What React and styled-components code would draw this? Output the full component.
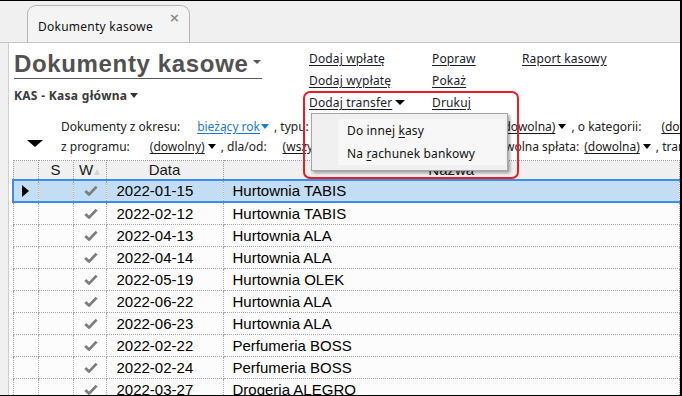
import React from 'react';
import styled, { createGlobalStyle } from 'styled-components';

const Global = createGlobalStyle`
  html, body { margin: 0; padding: 0; background: #fff; }
  body { font-family: "Noto Sans", "Liberation Sans", sans-serif; }
`;

const Frame = styled.div`
  position: relative;
  width: 682px;
  height: 396px;
  box-sizing: border-box;
  border-top: 1px solid #000;
  border-right: 2px solid #000;
  border-bottom: 1px solid #000;
  overflow: hidden;
  background: #fff;
  display: flex;
  flex-direction: column;
`;

const TabBar = styled.div`
  flex: none;
  height: 42px;
  box-sizing: border-box;
  background: #f0f0f0;
  border-bottom: 1px solid #c4c4c4;
  display: flex;
  align-items: flex-end;
  padding-left: 27px;
`;

const Tab = styled.div`
  width: 163px;
  height: 37px;
  box-sizing: border-box;
  border: 1px solid #b4b4b4;
  border-bottom: none;
  border-radius: 9px 9px 0 0;
  background: #f4f4f4;
  display: flex;
  justify-content: space-between;
  padding: 0 9px 0 10px;
`;

const TabLabel = styled.span`
  align-self: flex-end;
  padding-bottom: 7px;
  font-size: 12px;
  letter-spacing: 0.25px;
  color: #111;
`;

const TabClose = styled.span`
  margin-top: 5px;
  font-family: "DejaVu Sans", sans-serif;
  font-size: 13px;
  font-weight: bold;
  color: #8a8a8a;
  line-height: 14px;
`;

const Body = styled.div`
  flex: 1;
  display: flex;
  min-height: 0;
`;

const LeftStrip = styled.div`
  flex: none;
  width: 8px;
  background: #f0f0f0;
  border-right: 1px solid #cfcfcf;
`;

const Content = styled.div`
  flex: 1;
  min-width: 0;
  display: flex;
  flex-direction: column;
`;

const Header = styled.div`
  display: flex;
  padding: 5px 0 0 5px;
`;

const TitleBlock = styled.div`
  flex: none;
  width: 295px;
  display: flex;
  flex-direction: column;
  align-items: flex-start;
`;

const Title = styled.div`
  margin-top: 2px;
  display: inline-flex;
  align-items: center;
  gap: 5px;
  font-family: "Liberation Sans", Arial, sans-serif;
  font-weight: bold;
  font-size: 24px;
  letter-spacing: 0.65px;
  line-height: 28px;
  color: #515151;
  border-bottom: 1px solid #5a5a5a;
  padding-right: 1px;
`;

const Sub = styled.div`
  margin-top: 9px;
  display: inline-flex;
  align-items: center;
  gap: 3px;
  font-size: 12px;
  font-weight: bold;
  line-height: 16px;
  color: #3a3a3a;
  letter-spacing: 0.3px;
`;

const Arrow = styled.span`
  display: inline-block;
  width: 0;
  height: 0;
  border-left: ${p => p.$w || 4}px solid transparent;
  border-right: ${p => p.$w || 4}px solid transparent;
  border-top: ${p => p.$h || 5}px solid ${p => p.$c || '#000'};
  margin-left: ${p => p.$ml ?? 2}px;
  vertical-align: middle;
  position: relative;
  top: ${p => p.$t ?? -1}px;
`;

const Actions = styled.div`
  display: grid;
  grid-template-columns: 123px 90px auto;
  grid-auto-rows: 22px;
  align-items: center;
`;

const Link = styled.span`
  font-size: 12px;
  letter-spacing: 0.15px;
  line-height: 16px;
  color: #1b1b2e;
  text-decoration: underline;
  text-underline-offset: 2px;
  white-space: nowrap;
  justify-self: start;
`;

const Filters = styled.div`
  display: flex;
  margin-top: 3px;
`;

const FilterSide = styled.div`
  flex: none;
  width: 34px;
  padding: 23px 0 0 18px;
`;

const BigArrow = styled.span`
  display: block;
  width: 0;
  height: 0;
  border-left: 8px solid transparent;
  border-right: 8px solid transparent;
  border-top: 7px solid #000;
`;

const FilterRows = styled.div`
  display: flex;
  flex-direction: column;
  font-size: 12px;
  line-height: 20px;
  color: #222;
  white-space: nowrap;
`;

const FilterRow = styled.div`
  height: 20px;
`;

const Value = styled.span`
  margin-left: ${p => p.$ml ?? 14}px;
  color: ${p => p.$c || '#1a1a1a'};
  text-decoration: underline;
  text-decoration-color: ${p => p.$c || '#1a1a1a'};
  text-underline-offset: 2px;
`;

const Sep = styled.span`
  margin-left: 5px;
`;

const Table = styled.table`
  margin: 3px 0 0 3px;
  width: calc(100% - 3px);
  border-collapse: collapse;
  table-layout: fixed;
  font-family: "Liberation Sans", Arial, sans-serif;
  font-size: 15px;
  color: #000;
`;

const HeadCell = styled.th`
  height: 18px;
  padding: 0;
  font-weight: normal;
  background: #f0f0f0;
  border: 1px dotted #9a9a9a;
  text-align: center;
  line-height: 18px;
  color: #1a1a1a;
`;

const Row = styled.tr`
  height: 22px;
  background: ${p => (p.$sel ? '#c3ddf5' : '#fcfcfc')};
`;

const Cell = styled.td`
  padding: 0 0 0 ${p => p.$pl ?? 0}px;
  height: 21px;
  line-height: 20px;
  border: 1px dotted #a4a4a4;
  text-align: ${p => p.$center ? 'center' : 'left'};
  white-space: nowrap;
  overflow: hidden;
  ${p => p.$sel && `border-top: 2px solid #3b8ee4; border-bottom: 2px solid #3b8ee4; height: 19px;`}
  ${p => p.$sel && p.$first && `border-left: 2px solid #3b8ee4;`}
`;

const RowMark = styled.span`
  display: inline-block;
  width: 0;
  height: 0;
  border-top: 6px solid transparent;
  border-bottom: 6px solid transparent;
  border-left: 7px solid #000;
  vertical-align: middle;
  position: relative;
  top: -1px;
  left: 1px;
`;

const SortMark = styled.span`
  display: inline-block;
  width: 0;
  height: 0;
  border-left: 3px solid transparent;
  border-right: 3px solid transparent;
  border-bottom: 6px solid #d4d4d4;
  margin-left: 1px;
  vertical-align: middle;
  position: relative;
  top: 1px;
`;

const Check = () => (
  <svg width="14" height="12" viewBox="0 0 14 12" style={{ verticalAlign: 'middle', position: 'relative', top: '-1px', left: '1px' }}>
    <path d="M1.3 6 L5 9.6 L12.6 1.6" fill="none" stroke="#7e7e7e" strokeWidth="2.8" strokeLinejoin="round" />
  </svg>
);

const RedBox = styled.div`
  position: absolute;
  left: 303px;
  top: 90px;
  width: 216px;
  height: 88px;
  box-sizing: border-box;
  border: 2px solid #ec1c24;
  border-radius: 7px;
  pointer-events: none;
`;

const Menu = styled.div`
  position: absolute;
  left: 311px;
  top: 112px;
  width: 197px;
  height: 58px;
  box-sizing: border-box;
  background: #f0f0f0;
  border: 1px solid #a6a6a6;
  box-shadow: 2px 2px 3px rgba(0, 0, 0, 0.35);
  padding: 5px 2px 3px 2px;
  display: flex;
  flex-direction: column;
`;

const MenuItem = styled.div`
  height: 23px;
  line-height: 23px;
  padding-left: 33px;
  font-size: 12px;
  letter-spacing: 0.15px;
  color: #111;
  background: linear-gradient(to right, #f0f0f0 0, #f0f0f0 24px, #f7f7f7 24px);
`;

const U = styled.span`
  text-decoration: underline;
  text-underline-offset: 2px;
`;

const rows = [
  ['2022-01-15', 'Hurtownia TABIS'],
  ['2022-02-12', 'Hurtownia TABIS'],
  ['2022-04-13', 'Hurtownia ALA'],
  ['2022-04-14', 'Hurtownia ALA'],
  ['2022-05-19', 'Hurtownia OLEK'],
  ['2022-06-22', 'Hurtownia ALA'],
  ['2022-06-23', 'Hurtownia ALA'],
  ['2022-02-22', 'Perfumeria BOSS'],
  ['2022-02-24', 'Perfumeria BOSS'],
  ['2022-03-27', 'Drogeria ALEGRO'],
  ['2022-04-02', 'Drogeria ALEGRO'],
];

export default function App() {
  return (
    <>
      <Global />
      <Frame>
        <TabBar>
          <Tab>
            <TabLabel>Dokumenty kasowe</TabLabel>
            <TabClose>×</TabClose>
          </Tab>
        </TabBar>
        <Body>
          <LeftStrip />
          <Content>
            <Header>
              <TitleBlock>
                <Title>
                  Dokumenty kasowe
                  <Arrow $w={4} $h={4} $c="#555" $ml={0} $t={-2} />
                </Title>
                <Sub>
                  KAS - Kasa główna
                  <Arrow $w={4} $h={5} $c="#333" $ml={0} />
                </Sub>
              </TitleBlock>
              <Actions>
                <Link>Dodaj wpłatę</Link>
                <Link>Popraw</Link>
                <Link>Raport kasowy</Link>
                <Link>Dodaj wypłatę</Link>
                <Link>Pokaż</Link>
                <span />
                <Link>
                  Dodaj transfer<Arrow $w={5} $h={5} $ml={3} />
                </Link>
                <Link>Drukuj</Link>
                <span />
              </Actions>
            </Header>
            <Filters>
              <FilterSide>
                <BigArrow />
              </FilterSide>
              <FilterRows>
                <FilterRow>
                  Dokumenty z okresu:
                  <Value $ml={17} $c="#1a7bd6">bieżący rok<Arrow $w={4} $h={5} $c="#1a7bd6" $ml={1} /></Value>
                  <Sep>, typu:</Sep>
                  <Value $ml={14}>(dowolny)<Arrow $w={4} $h={5} $ml={3} /></Value>
                  <Sep>, o statusie:</Sep>
                  <Value $ml={42}>(dowolna)<Arrow $w={4} $h={5} $ml={3} /></Value>
                  <Sep>, o kategorii:</Sep>
                  <Value $ml={20}>(dowolna)<Arrow $w={4} $h={5} $ml={3} /></Value>
                </FilterRow>
                <FilterRow>
                  z programu:
                  <Value $ml={20}>(dowolny)<Arrow $w={4} $h={5} $ml={3} /></Value>
                  <Sep>, dla/od:</Sep>
                  <Value $ml={16}>(wszyscy)<Arrow $w={4} $h={5} $ml={3} /></Value>
                  <Sep>, płatność:</Sep>
                  <Value $ml={5}>(dowolna)<Arrow $w={4} $h={5} $ml={3} /></Value>
                  <Sep>, dowolna spłata:</Sep>
                  <Value $ml={5}>(dowolna)<Arrow $w={4} $h={5} $ml={3} /></Value>
                  <Sep>, transakcje:</Sep>
                </FilterRow>
              </FilterRows>
            </Filters>
            <Table>
              <colgroup>
                <col style={{ width: 25 }} />
                <col style={{ width: 35 }} />
                <col style={{ width: 33 }} />
                <col style={{ width: 117 }} />
                <col />
              </colgroup>
              <thead>
                <tr>
                  <HeadCell />
                  <HeadCell>S</HeadCell>
                  <HeadCell>W<SortMark /></HeadCell>
                  <HeadCell>Data</HeadCell>
                  <HeadCell>Nazwa</HeadCell>
                </tr>
              </thead>
              <tbody>
                {rows.map(([d, n], i) => {
                  const sel = i === 0;
                  return (
                    <Row key={i} $sel={sel}>
                      <Cell $sel={sel} $first $pl={7}>{sel && <RowMark />}</Cell>
                      <Cell $sel={sel} />
                      <Cell $sel={sel} $center><Check /></Cell>
                      <Cell $sel={sel} $pl={10}>{d}</Cell>
                      <Cell $sel={sel} $pl={9}>{n}</Cell>
                    </Row>
                  );
                })}
              </tbody>
            </Table>
          </Content>
        </Body>
        <RedBox />
        <Menu>
          <MenuItem>Do innej <U>k</U>asy</MenuItem>
          <MenuItem>Na <U>r</U>achunek bankowy</MenuItem>
        </Menu>
      </Frame>
    </>
  );
}
